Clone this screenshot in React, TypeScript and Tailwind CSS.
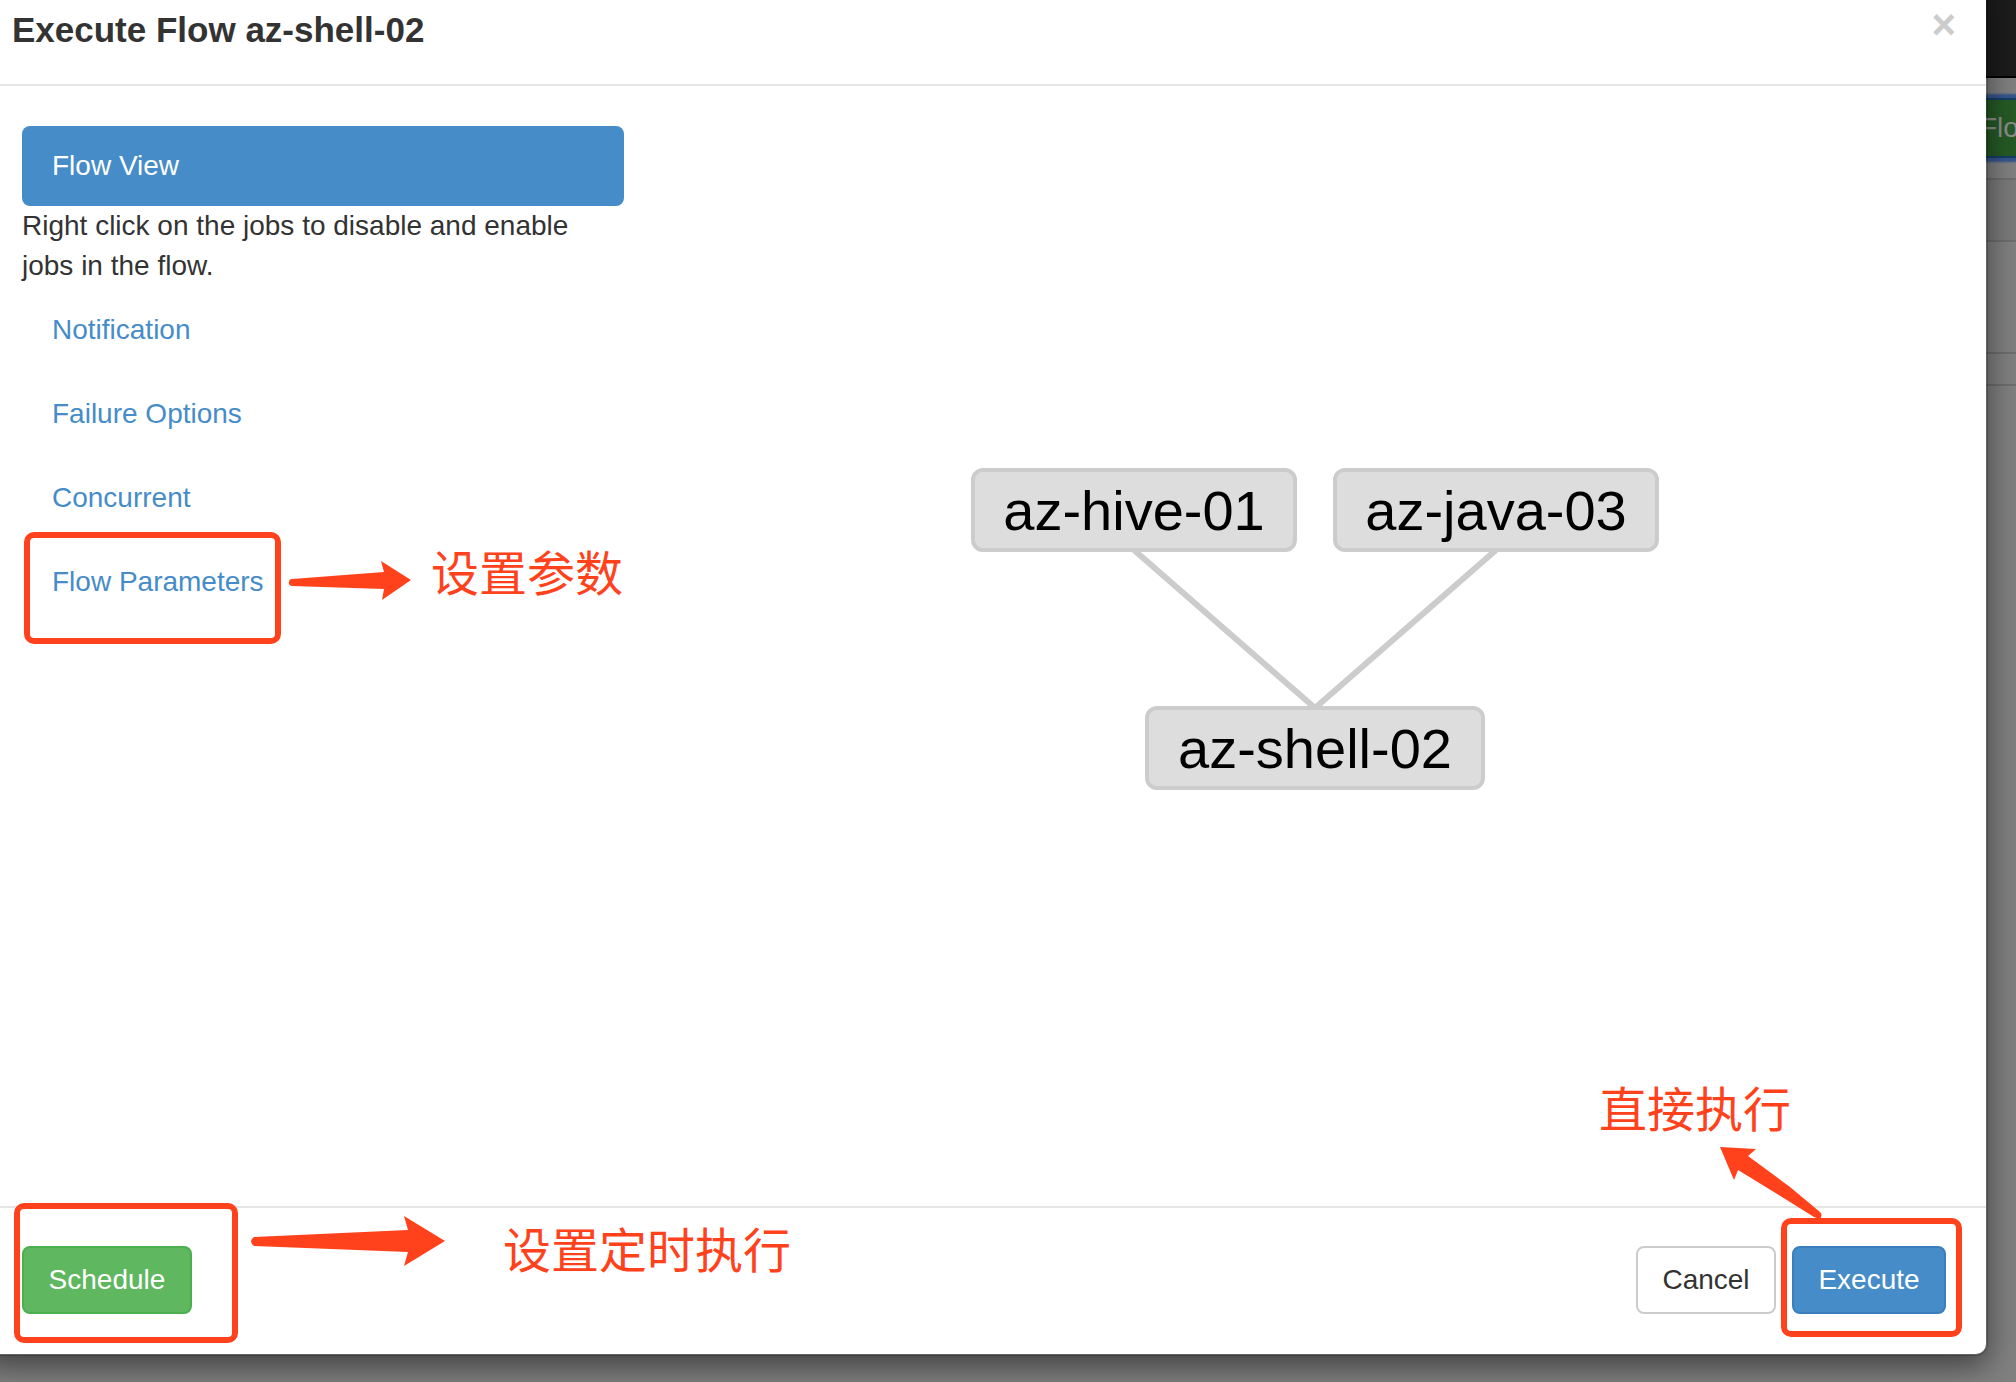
import type { ReactNode } from "react";

const NAV_ITEMS = ["Notification", "Failure Options", "Concurrent"];

function Arrow({ className, box, d }: { className: string; box: string; d: string }) {
  return (
    <svg className={`pointer-events-none absolute ${className}`} viewBox={box} fill="#ff421c" aria-hidden="true">
      <path d={d} />
    </svg>
  );
}

function Frame({ className }: { className: string }) {
  return <span className={`pointer-events-none absolute rounded-[10px] border-[6px] border-[#ff421c] ${className}`} />;
}

function Note({ className, children }: { className: string; children: ReactNode }) {
  return (
    <span lang="zh-CN" className={`pointer-events-none absolute whitespace-nowrap text-[48px] leading-[56px] text-[#ff421c] font-['Noto_Sans_CJK_SC',sans-serif] ${className}`}>
      {children}
    </span>
  );
}

function PageBehind() {
  return (
    <div className="absolute inset-0 flex flex-col bg-[#808080]" aria-hidden="true">
      <div className="h-[78px] border-b-2 border-black bg-[#1c1c1c]" />
      <div className="flex h-[102px] justify-end overflow-hidden border-b-2 border-[#6e6e6e] pt-5">
        <div className="-mr-[110px] h-[60px] w-[180px] rounded-lg border-2 border-[#123f63] bg-[#265a26] pl-8 text-[28px] leading-[56px] whitespace-nowrap text-[#8d8d8d] shadow-[0_0_2px_4px_#34558c]">
          Flow
        </div>
      </div>
      <div className="h-[62px] border-b-2 border-[#6e6e6e] bg-[#7a7a7a]" />
      <div className="h-[112px] border-b-2 border-[#6e6e6e]" />
      <div className="h-8 border-b-2 border-[#6e6e6e]" />
    </div>
  );
}

function FlowGraph() {
  const node = "absolute flex h-[84px] items-center justify-center rounded-xl border-4 border-[#ccc] bg-[#ddd] pt-[2px] text-[56px] leading-none whitespace-nowrap text-black";
  return (
    <div className="relative h-[322px] w-[688px]">
      <svg className="absolute inset-0 h-full w-full" viewBox="0 0 688 322" fill="none" stroke="#ccc" strokeWidth="6" aria-hidden="true">
        <path d="M163 82 344 240 525 82" />
      </svg>
      <div className={`${node} top-0 left-0 w-[326px]`}>az-hive-01</div>
      <div className={`${node} top-0 right-0 w-[326px]`}>az-java-03</div>
      <div className={`${node} bottom-0 left-[174px] w-[340px]`}>az-shell-02</div>
    </div>
  );
}

export default function App() {
  return (
    <div className="relative flex min-h-screen flex-col overflow-hidden pr-7 pb-[26px] font-['Liberation_Sans',Arial,sans-serif] text-[28px] leading-10 text-[#333]">
      <PageBehind />
      <div role="dialog" aria-labelledby="dialog-title" className="relative -mt-7 -ml-5 flex grow flex-col rounded-xl border-2 border-black/20 bg-white bg-clip-padding shadow-[0_10px_30px_rgba(0,0,0,0.5)]">
        <header className="flex items-start justify-between border-b-2 border-[#e5e5e5] px-[30px] pt-[30px] pb-7">
          <h4 id="dialog-title" className="text-[35px] leading-[52px] font-bold">Execute Flow az-shell-02</h4>
          <button type="button" aria-label="Close" className="text-[42px] leading-[42px] font-bold text-[#ccc]">×</button>
        </header>

        <main className="flex grow px-10 pt-10">
          <nav className="relative w-[602px] shrink-0">
            <ul className="flex flex-col gap-1">
              <li>
                <a href="#flow-view" className="block rounded-lg bg-[#468cc8] px-[30px] py-5 text-white">Flow View</a>
                <p>Right click on the jobs to disable and enable jobs in the flow.</p>
              </li>
              {NAV_ITEMS.map((label) => (
                <li key={label}>
                  <a href="#options" className="block px-[30px] py-5 text-[#468cc8]">{label}</a>
                </li>
              ))}
              <li className="relative">
                <a href="#flow-parameters" className="block px-[30px] py-5 text-[#468cc8]">Flow Parameters</a>
                <Frame className="-top-[10px] left-[2px] h-28 w-[257px]" />
                <Arrow
                  className="top-4 left-[266px] h-14 w-[126px]"
                  box="288 558 126 56"
                  d="M292 579 384 572 381 561 411 580 382 600 384 589 292 586Q288 585 289 582 289 579 292 579Z"
                />
                <Note className="top-0 left-[409px]">设置参数</Note>
              </li>
            </ul>
          </nav>
          <section aria-label="Flow graph" className="flex grow justify-center pt-[342px] pl-[60px]">
            <FlowGraph />
          </section>
        </main>

        <footer className="relative flex items-center justify-between border-t-2 border-[#e5e5e5] px-10 pt-[38px] pb-10">
          <div className="relative">
            <button type="button" className="h-[68px] w-[170px] rounded-lg border-2 border-[#4cae4c] bg-[#5fb760] text-white">Schedule</button>
            <Frame className="-top-[43px] -left-2 h-[140px] w-[224px]" />
            <Arrow
              className="-top-9 left-[226px] h-[60px] w-[200px]"
              box="248 1210 200 60"
              d="M254 1237 408 1230 404 1216 445 1241 404 1266 408 1252 254 1246Q248 1241 254 1237Z"
            />
            <Note className="-top-[27px] left-[481px]">设置定时执行</Note>
          </div>
          <div className="flex gap-4">
            <button type="button" className="h-[68px] w-[140px] rounded-lg border-2 border-[#ccc] bg-white">Cancel</button>
            <div className="relative">
              <button type="button" className="h-[68px] w-[154px] rounded-lg border-2 border-[#3a7fbd] bg-[#468cc8] text-white">Execute</button>
              <Frame className="-top-7 -left-[11px] h-[119px] w-[181px]" />
              <Arrow
                className="-top-[102px] right-[122px] h-[76px] w-[106px]"
                box="1718 1144 106 76"
                d="M1720 1147 1756 1149 1748 1156 1790 1187 1820 1212Q1823 1215 1820 1219L1814 1217 1790 1202 1738 1170 1734 1180Z"
              />
              <Note className="-top-[168px] right-[155px]">直接执行</Note>
            </div>
          </div>
        </footer>
      </div>
    </div>
  );
}
